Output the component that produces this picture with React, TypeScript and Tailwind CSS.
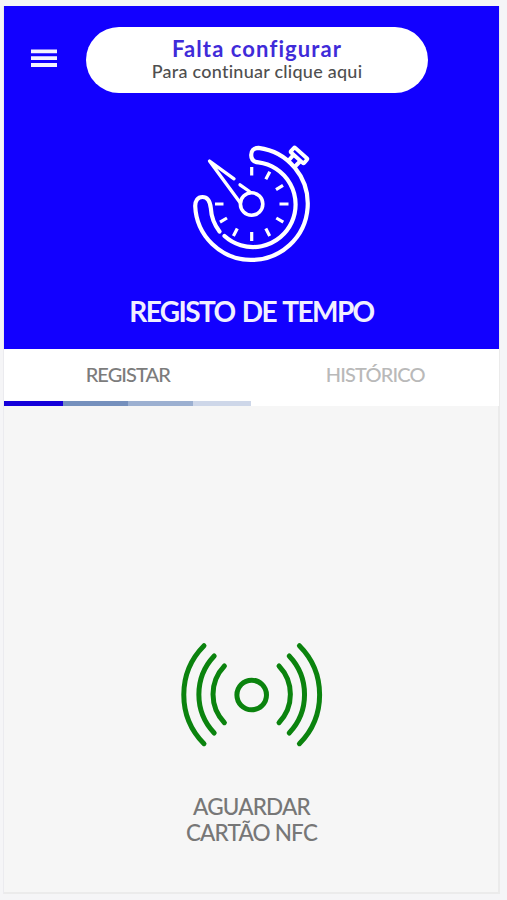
import { useState } from 'react';

const tabs = [
  { id: 'registar', label: 'REGISTAR', className: 'tracking-[-0.95px]' },
  { id: 'historico', label: 'HISTÓRICO', className: 'tracking-[-0.85px]' },
];

function MenuIcon() {
  return (
    <svg width="28" height="20" viewBox="0 0 28 20" fill="none" stroke="#f4f2ff" strokeWidth="3.8">
      <path d="M1 3.3h26M1 10.2h26M1 17h26" />
    </svg>
  );
}

function StopwatchIcon() {
  return (
    <svg
      width="145"
      height="140"
      viewBox="0 0 145 140"
      fill="none"
      stroke="white"
      strokeWidth="4.2"
      strokeLinecap="round"
      strokeLinejoin="round"
    >
      {/* dial */}
      <path d="M39.5 96.5A42.5 42.5 0 0 1 30.8 73C30 66 27.5 62 22.5 62C17.5 62 15.2 66 15.2 71A56.3 56.3 0 1 0 78.5 12.8C73.5 12.8 71.2 16 71.2 20C71.2 24.5 74 27 78.5 27.4A42.5 42.5 0 1 1 44.5 101" />
      {/* hand */}
      <path d="M60 67.5L29.5 26L54 43.8M60 49.8L69.5 56.5" strokeWidth="3.3" />
      <circle cx="71.6" cy="69" r="11.2" strokeWidth="3.6" />
      {/* ticks */}
      <path
        strokeWidth="3.2"
        strokeLinecap="butt"
        d="M71.7 32v8.5M89.8 36.8l-4 7.4M103 50.3l-7 4.3M99.5 69h9M96.3 83l7 4.2M85.8 93.5l3.9 7.4M71.7 97v9M57.3 93.5l-3.9 7.4M47 83l-7 4.2M35 69h8.5"
      />
      {/* crown */}
      <path d="M109 25L113 20.5M115.5 31L119.5 27" strokeWidth="4" />
      <rect x="-8.8" y="-3.1" width="17.6" height="6.2" rx="1" strokeWidth="3.9" transform="translate(119 20.4) rotate(42)" />
    </svg>
  );
}

function NfcIcon() {
  return (
    <svg width="165" height="130" viewBox="0 0 165 130" fill="none" stroke="#0b830e" strokeWidth="5" strokeLinecap="round">
      <circle cx="81.7" cy="65" r="14.8" />
      <path d="M34 15.7A69.5 69.5 0 0 0 34 113.7M44.2 26A56 56 0 0 0 44.2 103M54.4 36A41 41 0 0 0 54.4 92.7" />
      <path d="M129.4 15.7A69.5 69.5 0 0 1 129.4 113.7M119.2 26A56 56 0 0 1 119.2 103M109 36A41 41 0 0 1 109 92.7" />
    </svg>
  );
}

export default function App() {
  const [active, setActive] = useState('registar');

  return (
    <div className="h-[900px] w-[507px] bg-[#f5f5f7] pl-1 pt-1.5 font-['Lato',sans-serif]">
      <div className="flex h-[888px] w-[496px] flex-col border-b-2 border-r-2 border-[#ebebeb] bg-[#f6f6f6] shadow-[-1px_0_0_#ebebef]">
        <header className="flex h-[343px] w-[495px] shrink-0 flex-col items-center bg-[#1200ff]">
          <div className="flex w-full items-start pl-[26px] pt-[21px]">
            <button type="button" aria-label="Menu" className="mt-[21px]">
              <MenuIcon />
            </button>
            <button type="button" className="ml-7 flex h-[66px] w-[342px] flex-col items-center rounded-full bg-white pt-2.5">
              <span className="text-[22px] font-bold leading-6 tracking-[1.1px] text-[#3f2bd9]">Falta configurar</span>
              <span className="text-[18px] font-medium leading-5 tracking-[0.25px] text-[#4f4f4f]">Para continuar clique aqui</span>
            </button>
          </div>
          <div className="mr-[-1px] mt-[42px] h-[140px]">
            <StopwatchIcon />
          </div>
          <h1 className="mt-[19px] whitespace-nowrap text-[28px] font-bold leading-[34px] tracking-[-1.6px] [word-spacing:2px] text-[#f1efff]">
            REGISTO DE TEMPO
          </h1>
        </header>

        <nav className="w-[495px] shrink-0 bg-white">
          <div className="grid h-[52px] grid-cols-2 pb-0.5">
            {tabs.map((tab) => (
              <button
                key={tab.id}
                type="button"
                onClick={() => setActive(tab.id)}
                className={`${tab.className} text-[20px] font-medium ${active === tab.id ? 'text-[#7c7c7c]' : 'text-[#b9b9b9]'}`}
              >
                {tab.label}
              </button>
            ))}
          </div>
          <div className="flex h-[5px]">
            <div className="w-[59px] bg-[#1500da]" />
            <div className="w-[65px] bg-[#7590bd]" />
            <div className="w-[65px] bg-[#9cb0d1]" />
            <div className="w-[58px] bg-[#ced7e9]" />
          </div>
        </nav>

        <main className="flex w-[495px] flex-1 flex-col items-center pt-[224px]">
          <div className="ml-0.5">
            <NfcIcon />
          </div>
          <p className="mt-[34px] text-center text-[22.5px] font-medium leading-[26px] tracking-[-0.8px] text-[#777777]">
            AGUARDAR
            <br />
            CARTÃO NFC
          </p>
        </main>
      </div>
    </div>
  );
}
